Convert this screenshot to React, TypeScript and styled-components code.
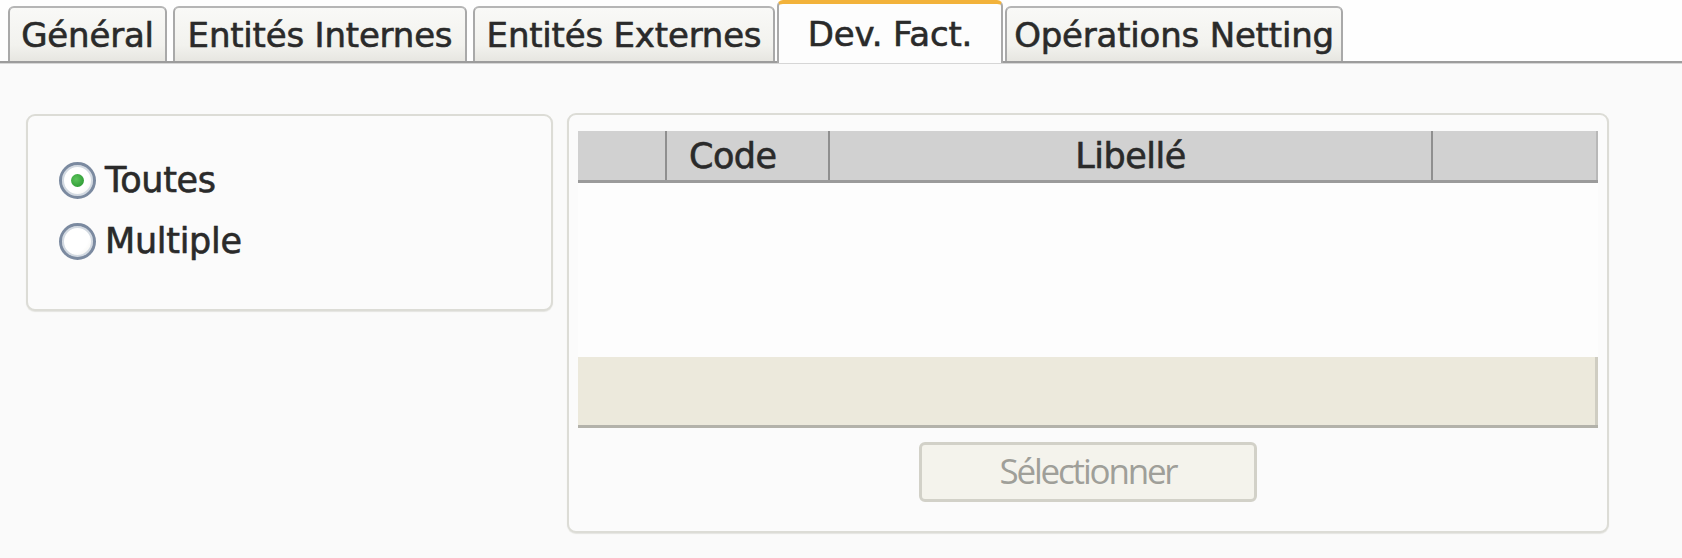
import React from "react";
import styled, { createGlobalStyle } from "styled-components";

const Global = createGlobalStyle`
  html, body { margin: 0; padding: 0; width: 1682px; height: 558px; overflow: hidden; background: #fafafa; }
  #root { width: 1682px; height: 558px; }
`;

const Page = styled.div`
  width: 1682px;
  height: 558px;
  display: flex;
  flex-direction: column;
  background: #fafafa;
  font-family: "DejaVu Sans", Verdana, sans-serif;
  color: #2a2a2a;
`;

const TabStrip = styled.div`
  height: 61px;
  flex: none;
  display: flex;
  align-items: flex-end;
  gap: 6px;
  padding-left: 8px;
  background: #fefefe;
  border-bottom: 2px solid #9c9c9c;
  box-shadow: 0 1px 0 #d6d6d6;
`;

const Tab = styled.div<{ $active?: boolean; $w: number }>`
  box-sizing: border-box;
  width: ${(p) => p.$w}px;
  height: ${(p) => (p.$active ? 63 : 55)}px;
  margin: 0 ${(p) => (p.$active ? -4 : 0)}px ${(p) => (p.$active ? -2 : 0)}px;
  display: flex;
  align-items: center;
  justify-content: center;
  font-size: 34px;
  letter-spacing: -0.2px;
  white-space: nowrap;
  -webkit-text-stroke: 0.5px #2a2a2a;
  text-shadow: 0 0 1px rgba(0, 0, 0, 0.3);
  border: 2px solid #a9a9a9;
  border-bottom: none;
  border-radius: 6px 6px 0 0;
  background: ${(p) =>
    p.$active ? "#fdfdfd" : "linear-gradient(#f9f9f7, #f2f2ee 70%, #e7e6e1)"};
  border-top: ${(p) => (p.$active ? "4px solid #f2b23a" : "2px solid #b5b5b5")};
  padding-top: ${(p) => (p.$active ? 0 : 1)}px;
  z-index: ${(p) => (p.$active ? 1 : 0)};
`;

const Content = styled.div`
  display: flex;
  align-items: flex-start;
  gap: 14px;
  padding: 51px 0 0 26px;
`;

const Panel = styled.div<{ $w: number; $h: number }>`
  box-sizing: border-box;
  width: ${(p) => p.$w}px;
  height: ${(p) => p.$h}px;
  border: 2px solid #dcdcd6;
  border-radius: 9px;
  background: #fbfbfb;
  box-shadow: 0 1px 1px #e4e4e0;
`;

const RadioList = styled.div`
  display: flex;
  flex-direction: column;
  gap: 21px;
  padding: 44px 0 0 31px;
`;

const RadioRow = styled.label`
  display: flex;
  align-items: center;
  gap: 9px;
  font-size: 35px;
  height: 40px;
  letter-spacing: -0.3px;
  -webkit-text-stroke: 0.5px #2a2a2a;
  text-shadow: 0 0 1px rgba(0, 0, 0, 0.3);
`;

const RadioDot = styled.span<{ $checked?: boolean }>`
  box-sizing: border-box;
  width: 37px;
  height: 37px;
  border-radius: 50%;
  border: 3px solid #7b8aa0;
  box-shadow: inset 0 0 0 2px #d3dae2;
  background: radial-gradient(circle at 35% 35%, #ffffff 55%, #ecece6);
  display: flex;
  align-items: center;
  justify-content: center;
  &::after {
    content: "";
    width: 13px;
    height: 13px;
    border-radius: 50%;
    background: ${(p) =>
      p.$checked ? "radial-gradient(circle at 40% 40%, #5cc45c, #22902a)" : "transparent"};
  }
`;

const RightPanelInner = styled.div`
  display: flex;
  flex-direction: column;
  padding: 16px 9px 0 9px;
`;

const HeaderRow = styled.div`
  display: grid;
  grid-template-columns: 89px 163px 603px 165px;
  height: 49px;
  background: #d1d1d1;
  border-bottom: 3px solid #9b9b9b;
`;

const HeaderCell = styled.div<{ $center?: boolean }>`
  display: flex;
  align-items: center;
  justify-content: ${(p) => (p.$center ? "center" : "flex-start")};
  padding-left: ${(p) => (p.$center ? 0 : 22)}px;
  border-right: 2px solid #8f8f8f;
  font-size: 35px;
  letter-spacing: -0.5px;
  -webkit-text-stroke: 0.5px #2a2a2a;
  text-shadow: 0 0 1px rgba(0, 0, 0, 0.3);
  &:last-child {
    border-right: none;
    box-shadow: inset -2px 0 0 #b8b8b8;
  }
`;

const GridBody = styled.div`
  height: 174px;
  background: #fdfdfd;
`;

const GridFooter = styled.div`
  height: 68px;
  background: #ece9dc;
  border-bottom: 3px solid #b3b2aa;
  box-shadow: inset -3px 0 0 #cfcdc2;
`;

const ButtonRow = styled.div`
  display: flex;
  justify-content: center;
  padding-top: 14px;
`;

const Button = styled.button`
  box-sizing: border-box;
  width: 338px;
  height: 60px;
  border: 3px solid #d2d1c8;
  border-radius: 6px;
  background: #f4f3ec;
  color: #9f9f99;
  font-family: "Open Sans", sans-serif;
  font-size: 35px;
  letter-spacing: -2.2px;
  padding: 0 0 4px;
`;

const tabs = [
  { label: "Général", w: 159 },
  { label: "Entités Internes", w: 294 },
  { label: "Entités Externes", w: 302 },
  { label: "Dev. Fact.", w: 226, active: true },
  { label: "Opérations Netting", w: 338 },
];

export default function App() {
  return (
    <>
      <Global />
      <Page>
        <TabStrip>
          {tabs.map((t) => (
            <Tab key={t.label} $w={t.w} $active={t.active}>
              {t.label}
            </Tab>
          ))}
        </TabStrip>
        <Content>
          <Panel $w={527} $h={197}>
            <RadioList>
              <RadioRow>
                <RadioDot $checked />
                Toutes
              </RadioRow>
              <RadioRow>
                <RadioDot />
                Multiple
              </RadioRow>
            </RadioList>
          </Panel>
          <Panel $w={1042} $h={420} style={{ marginTop: -1 }}>
            <RightPanelInner>
              <HeaderRow>
                <HeaderCell />
                <HeaderCell>Code</HeaderCell>
                <HeaderCell $center>Libellé</HeaderCell>
                <HeaderCell />
              </HeaderRow>
              <GridBody />
              <GridFooter />
              <ButtonRow>
                <Button disabled>Sélectionner</Button>
              </ButtonRow>
            </RightPanelInner>
          </Panel>
        </Content>
      </Page>
    </>
  );
}
